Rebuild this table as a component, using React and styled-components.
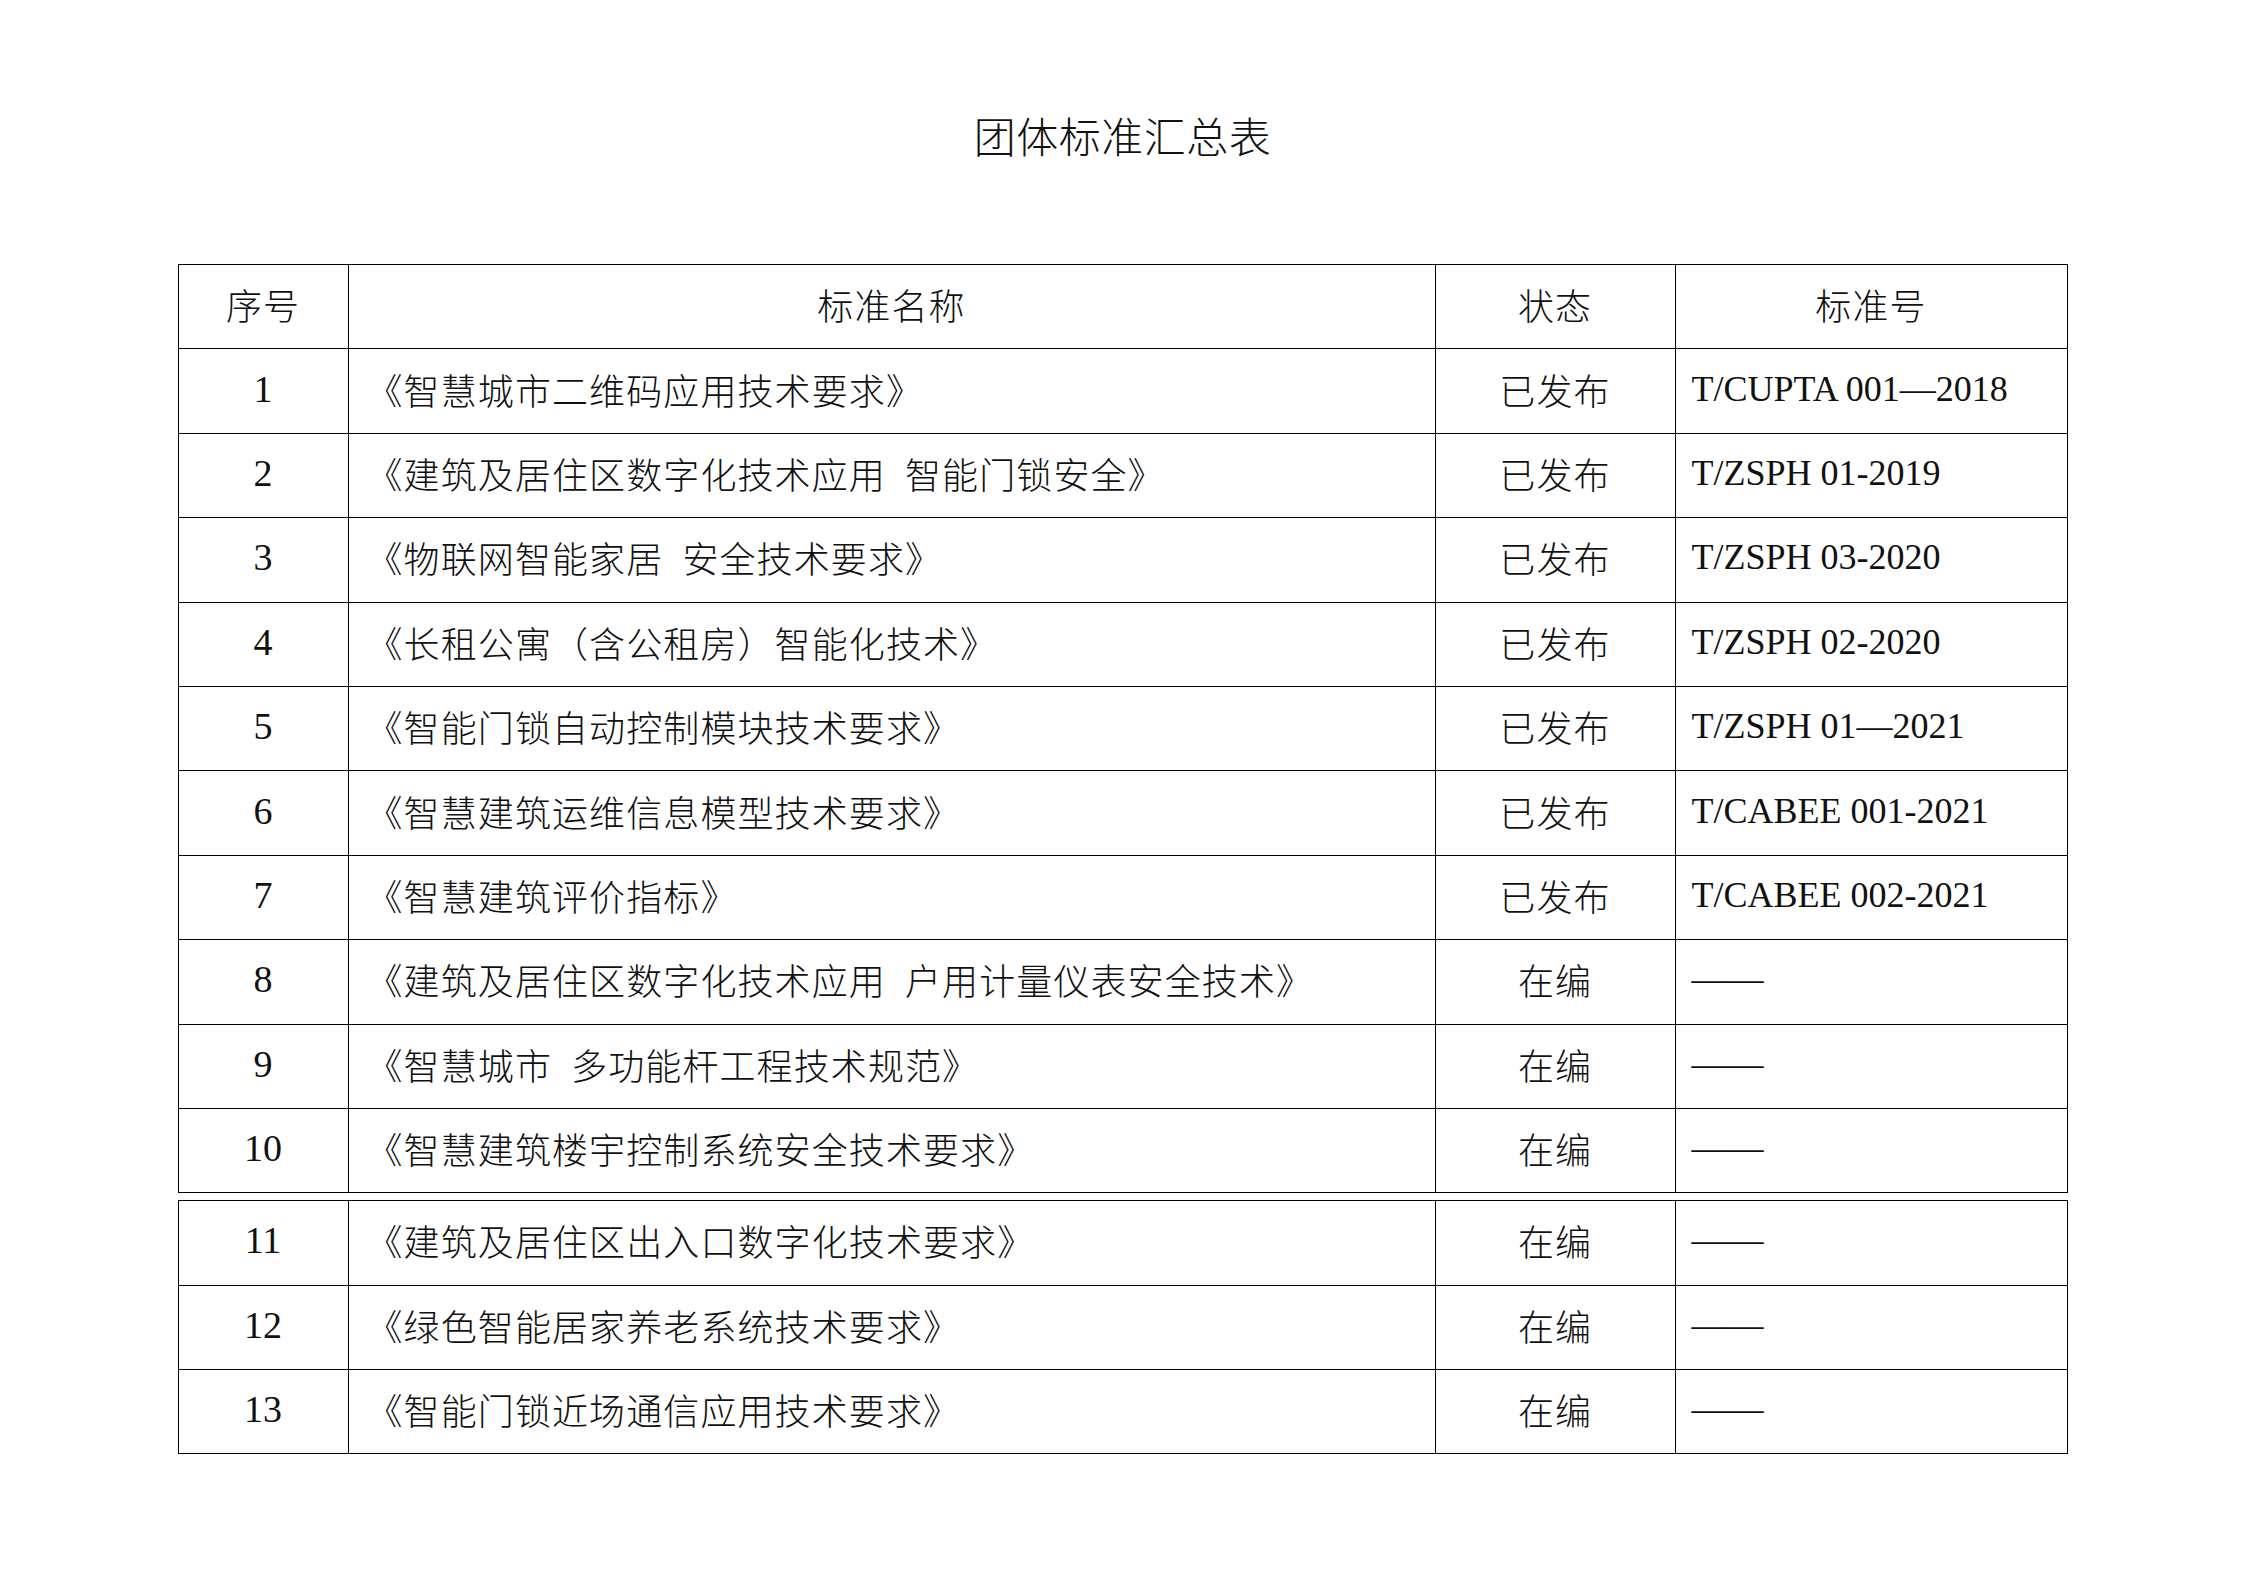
import React from 'react';
import styled, { createGlobalStyle } from 'styled-components';

const GlobalStyle = createGlobalStyle`
  html, body {
    margin: 0;
    padding: 0;
    background: #fff;
  }
  body {
    font-family: "Liberation Serif", "Noto Sans CJK SC", serif;
    color: #111;
  }
`;

const Page = styled.div`
  width: 2245px;
  min-height: 1574px;
  box-sizing: border-box;
  padding-top: 114px;
  display: flex;
  flex-direction: column;
  align-items: center;
`;

const Title = styled.h1`
  margin: 0;
  font-family: "Noto Sans CJK SC", sans-serif;
  font-weight: 300;
  font-size: 42px;
  line-height: 42px;
  letter-spacing: 0.5px;
  color: #111;
`;

const Tables = styled.div`
  margin-top: 108px;
  display: flex;
  flex-direction: column;
  gap: 7px;
`;

const Table = styled.div`
  display: grid;
  grid-template-columns: 170px 1087px 240px 392px;
  grid-auto-rows: 84.4px;
  border-left: 1px solid #000;
  border-top: 1px solid #000;
`;

const Cell = styled.div`
  box-sizing: border-box;
  border-right: 1px solid #000;
  border-bottom: 1px solid #000;
  display: flex;
  align-items: center;
  justify-content: ${(p) => (p.$align === 'left' ? 'flex-start' : 'center')};
  padding-left: ${(p) => (p.$align === 'left' ? p.$pad || '18px' : '0')};
  padding-bottom: 5px;
  font-family: ${(p) =>
    p.$latin
      ? '"Liberation Serif", "Noto Sans CJK SC", serif'
      : '"Noto Sans CJK SC", sans-serif'};
  font-weight: ${(p) => (p.$latin ? 400 : 300)};
  font-size: ${(p) => p.$size || '36px'};
  letter-spacing: ${(p) => (p.$latin ? '0' : '1.1px')};
  line-height: 1;
  white-space: pre;
  color: #111;
`;

const headers = ['序号', '标准名称', '状态', '标准号'];

const rows = [
  ['1', '《智慧城市二维码应用技术要求》', '已发布', 'T/CUPTA 001—2018'],
  ['2', '《建筑及居住区数字化技术应用\u2002智能门锁安全》', '已发布', 'T/ZSPH 01-2019'],
  ['3', '《物联网智能家居\u2002安全技术要求》', '已发布', 'T/ZSPH 03-2020'],
  ['4', '《长租公寓（含公租房）智能化技术》', '已发布', 'T/ZSPH 02-2020'],
  ['5', '《智能门锁自动控制模块技术要求》', '已发布', 'T/ZSPH 01—2021'],
  ['6', '《智慧建筑运维信息模型技术要求》', '已发布', 'T/CABEE 001-2021'],
  ['7', '《智慧建筑评价指标》', '已发布', 'T/CABEE 002-2021'],
  ['8', '《建筑及居住区数字化技术应用\u2002户用计量仪表安全技术》', '在编', '——'],
  ['9', '《智慧城市\u2002多功能杆工程技术规范》', '在编', '——'],
  ['10', '《智慧建筑楼宇控制系统安全技术要求》', '在编', '——'],
];

const moreRows = [
  ['11', '《建筑及居住区出入口数字化技术要求》', '在编', '——'],
  ['12', '《绿色智能居家养老系统技术要求》', '在编', '——'],
  ['13', '《智能门锁近场通信应用技术要求》', '在编', '——'],
];

const Row = ({ row }) => (
  <>
    <Cell $latin $size="38px">{row[0]}</Cell>
    <Cell $align="left">{row[1]}</Cell>
    <Cell>{row[2]}</Cell>
    <Cell $align="left" $latin $pad="16px">{row[3]}</Cell>
  </>
);

const App = () => (
  <Page>
    <GlobalStyle />
    <Title>团体标准汇总表</Title>
    <Tables>
      <Table>
        {headers.map((h) => (
          <Cell key={h}>{h}</Cell>
        ))}
        {rows.map((r) => (
          <Row key={r[0]} row={r} />
        ))}
      </Table>
      <Table>
        {moreRows.map((r) => (
          <Row key={r[0]} row={r} />
        ))}
      </Table>
    </Tables>
  </Page>
);

export default App;
